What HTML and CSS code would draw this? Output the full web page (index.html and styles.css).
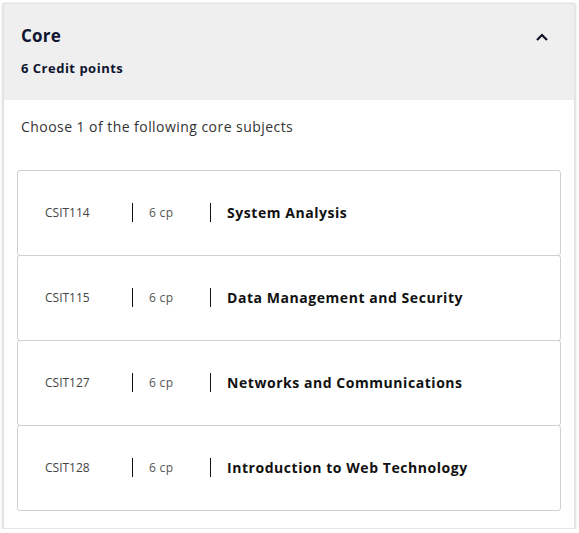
FILE: index.html
```html
<!DOCTYPE html>
<html>
<head>
<meta charset="utf-8">
<link rel="stylesheet" href="styles.css">
</head>
<body>
<div class="card">
  <div class="header">
    <div class="header-text">
      <div class="title">Core</div>
      <div class="credits">6 Credit points</div>
    </div>
    <svg class="chevron" width="14" height="10" viewBox="0 0 14 10"><path d="M2 8 L7 3 L12 8" fill="none" stroke="#0d1326" stroke-width="2.2"/></svg>
  </div>
  <div class="body">
    <p class="intro">Choose 1 of the following core subjects</p>
    <div class="list">
      <div class="item"><span class="code">CSIT114</span><span class="sep"></span><span class="cp">6 cp</span><span class="sep"></span><span class="name">System Analysis</span></div>
      <div class="item"><span class="code">CSIT115</span><span class="sep"></span><span class="cp">6 cp</span><span class="sep"></span><span class="name">Data Management and Security</span></div>
      <div class="item"><span class="code">CSIT127</span><span class="sep"></span><span class="cp">6 cp</span><span class="sep"></span><span class="name">Networks and Communications</span></div>
      <div class="item"><span class="code">CSIT128</span><span class="sep"></span><span class="cp">6 cp</span><span class="sep"></span><span class="name">Introduction to Web Technology</span></div>
    </div>
  </div>
</div>
</body>
</html>
```
FILE: styles.css
```css
html, body { margin: 0; padding: 0; background: #fff; }
body { padding: 3px 4px 0 3px; font-family: "Open Sans", "Noto Sans", sans-serif; color: #111; }
.card {
  background: #fff;
  border: 1px solid #e3e3e3;
  box-shadow: 0 1px 3px rgba(0,0,0,0.25);
  width: 570px;
}
.header {
  background: #efefef;
  height: 96px;
  display: flex;
  justify-content: space-between;
  align-items: flex-start;
  padding: 0 25px 0 17px;
  box-sizing: border-box;
}
.header-text { padding-top: 21px; }
.title { font-size: 17px; font-weight: 700; color: #0f1530; line-height: 22px; letter-spacing: 0.2px; }
.credits { font-size: 13px; font-weight: 700; color: #0f1530; line-height: 18px; margin-top: 12px; letter-spacing: 0.5px; }
.chevron { margin-top: 28px; }
.body { padding: 17px 13px 17px 13px; }
.intro { margin: 0 0 0 4px; font-size: 14px; color: #333; line-height: 20px; letter-spacing: 0.45px; }
.list { margin-top: 33px; }
.item {
  display: flex;
  align-items: center;
  border: 1px solid #d0d0d0;
  border-radius: 3px;
  box-sizing: border-box;
  height: 86px;
  padding-left: 27px;
  padding-bottom: 2px;
}
.item + .item { margin-top: -1px; }
.code { width: 87px; font-size: 12px; color: #444; }
.sep { width: 1px; height: 19px; background: #111; }
.cp { width: 77px; padding-left: 16px; font-size: 12px; color: #555; box-sizing: border-box; letter-spacing: 0.3px; }
.name { padding-left: 16px; font-size: 14px; font-weight: 700; color: #111; letter-spacing: 0.55px; }
```
